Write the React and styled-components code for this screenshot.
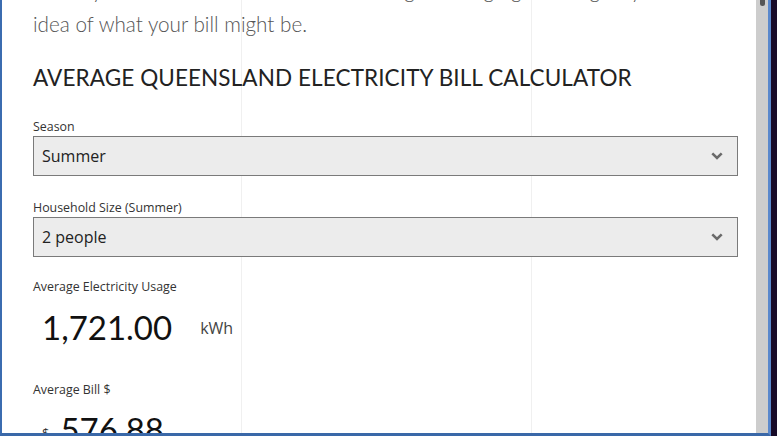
import { useLayoutEffect, useRef } from "react";
import styled, { createGlobalStyle } from "styled-components";

const GlobalStyle = createGlobalStyle`
  html, body {
    margin: 0;
    padding: 0;
    background: #170a28;
    overflow: hidden;
  }
`;

const fields = [
  { label: "Season", value: "Summer", gap: 23 },
  { label: "Household Size (Summer)", value: "2 people", gap: 21 },
];

const Chevron = () => (
  <svg width="12" height="8" viewBox="0 0 12 8">
    <polyline
      points="1.3,1.4 6,6 10.7,1.4"
      fill="none"
      stroke="#6a6a6a"
      strokeWidth="2.6"
    />
  </svg>
);

const App = () => {
  const scroller = useRef(null);

  useLayoutEffect(() => {
    if (scroller.current) scroller.current.scrollTop = 27;
  }, []);

  return (
    <>
      <GlobalStyle />
      <Screen>
        <Window>
          <Content ref={scroller}>
            <Intro>
              Select your season and household size to get a rough guide to give you an
              <br />
              idea of what your bill might be.
            </Intro>
            <Heading>AVERAGE QUEENSLAND ELECTRICITY BILL CALCULATOR</Heading>

            {fields.map((field) => (
              <Field key={field.label} $gap={field.gap}>
                <Label>{field.label}</Label>
                <Select>
                  <span>{field.value}</span>
                  <Chevron />
                </Select>
              </Field>
            ))}

            <Field $gap={28}>
              <Label>Average Electricity Usage</Label>
              <Result>
                <Amount>1,721.00</Amount>
                <Unit>kWh</Unit>
              </Result>
            </Field>

            <Field $gap={20}>
              <Label>Average Bill $</Label>
              <Result $bill>
                <Currency>$</Currency>
                <Amount>576.88</Amount>
              </Result>
            </Field>
          </Content>
          <Scrollbar>
            <Thumb />
          </Scrollbar>
        </Window>
      </Screen>
    </>
  );
};

const Screen = styled.div`
  width: 777px;
  height: 436px;
  display: flex;
  padding-right: 6px;
  box-sizing: border-box;
`;

const Window = styled.div`
  flex: 1;
  display: flex;
  min-width: 0;
  background: #fff;
  border-left: 2px solid #3b6cb0;
  border-right: 3px solid #5a88cc;
  border-bottom: 3px solid #3a68a8;
`;

const Content = styled.div`
  flex: 1;
  overflow: hidden;
  padding: 0 18px 0 31px;
  background: linear-gradient(
    to right,
    transparent 239px,
    #f0f0f0 239px,
    #f0f0f0 240px,
    transparent 240px,
    transparent 529px,
    #f0f0f0 529px,
    #f0f0f0 530px,
    transparent 530px
  );
`;

const Intro = styled.p`
  margin: 0;
  font-family: Lato, "Open Sans", sans-serif;
  font-weight: 300;
  font-size: 20.7px;
  line-height: 34px;
  color: #555;
  white-space: nowrap;
`;

const Heading = styled.h2`
  margin: 22px 0 25px;
  font-family: Lato, "Open Sans", sans-serif;
  font-weight: 400;
  font-size: 22.5px;
  line-height: 30px;
  color: #222;
  letter-spacing: 0.1px;
`;

const Field = styled.div`
  display: flex;
  flex-direction: column;
  margin-bottom: ${(p) => p.$gap}px;
`;

const Label = styled.div`
  font-family: "Open Sans", sans-serif;
  font-size: 12.4px;
  line-height: 18px;
  color: #333;
`;

const Select = styled.div`
  height: 40px;
  box-sizing: border-box;
  display: flex;
  align-items: center;
  justify-content: space-between;
  padding: 0 14px 0 8px;
  background: #ececec;
  border: 1px solid #7a7a7a;
  font-family: "Open Sans", sans-serif;
  font-size: 16px;
  color: #222;
`;

const Result = styled.div`
  display: flex;
  align-items: center;
  gap: ${(p) => (p.$bill ? "11px" : "28px")};
  padding: ${(p) => (p.$bill ? "4px 0 0 9px" : "5px 0 0 9px")};
`;

const Amount = styled.span`
  font-family: Lato, "Open Sans", sans-serif;
  font-size: 33px;
  line-height: 52px;
  color: #111;
`;

const Unit = styled.span`
  font-family: "Open Sans", sans-serif;
  font-size: 16px;
  color: #444;
  padding-top: 2px;
`;

const Currency = styled.span`
  font-family: "Open Sans", sans-serif;
  font-size: 13px;
  color: #333;
  padding-top: 8px;
`;

const Scrollbar = styled.div`
  width: 12px;
  flex-shrink: 0;
  background: #cdcdcd;
  display: flex;
  justify-content: center;
`;

const Thumb = styled.div`
  width: 5px;
  height: 6px;
  background: #555;
  border-radius: 0 0 3px 3px;
`;

export default App;
